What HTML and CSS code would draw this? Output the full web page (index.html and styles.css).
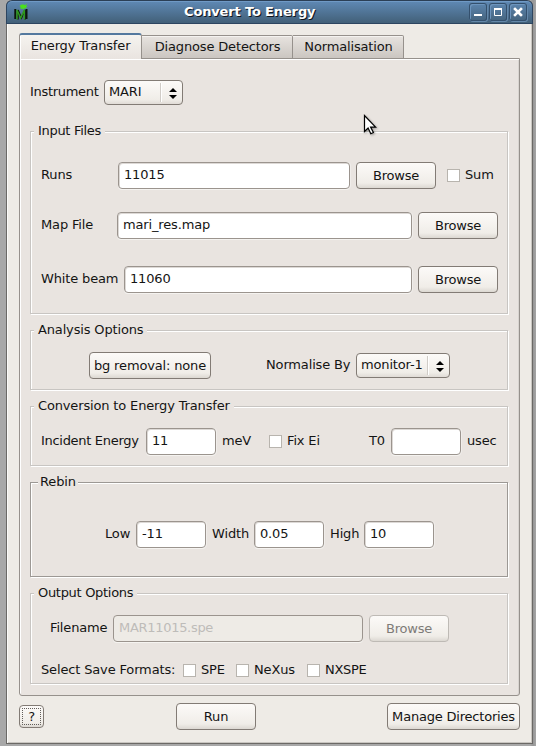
FILE: index.html
```html
<!DOCTYPE html>
<html lang="en">
<head>
<meta charset="utf-8">
<title>Convert To Energy</title>
<link rel="stylesheet" href="styles.css">
</head>
<body>
<div class="window">
  <header class="titlebar">
    <svg class="app-icon" width="15" height="18" viewBox="0 0 15 18">
      <path d="M1.300 6v10M12.500 6v10" fill="none" stroke="#0c160c" stroke-width="2"/>
      <path d="M4 16.500V7l3.500 8L11 7v9.500" fill="none" stroke="#0c1a0c" stroke-width="1.500"/>
      <path d="M3 16.500V7l3.700 8 3.600-8v9.500" fill="none" stroke="#2f9a1c" stroke-width="1.400"/>
      <path d="M5.500 3l2-1.500h2.500l1 .7L13 .5l-.8 2.200 1.300.8-1.600.7.6 1.800-1.800-1-1.200 1.500-1.200-1-2 .8.600-1.800z" fill="#4be01c"/>
    </svg>
    <h1 class="title">Convert To Energy</h1>
    <div class="controls">
      <span class="control"><svg width="18" height="18"><path d="M5 12h8" stroke="#fff" stroke-width="2"/></svg></span>
      <span class="control"><svg width="18" height="18"><path d="M5.500 6v6.500h7V6" fill="none" stroke="#fff"/><path d="M5 6h8" stroke="#fff" stroke-width="2"/></svg></span>
      <span class="control"><svg width="18" height="18"><path d="M6 6l6 6M12 6l-6 6" stroke="#fff" stroke-width="2.600" stroke-linecap="square"/></svg></span>
    </div>
  </header>
  <nav class="tabs">
    <span class="tab active">Energy Transfer</span>
    <span class="tab detectors">Diagnose Detectors</span>
    <span class="tab normalisation">Normalisation</span>
  </nav>
  <main class="panel">
    <div class="row instrument">
      <span class="label w-instrument tight">Instrument</span>
      <span class="combo c-instrument"><span class="value">MARI</span><svg class="arrows" width="8" height="11"><path d="M0 4L4 0l4 4zM0 7h8l-4 4z"/></svg></span>
    </div>

    <section class="group input-files">
      <h2 class="legend tight">Input Files</h2>
      <div class="row runs">
        <span class="label w-runs">Runs</span><span class="field f-runs">11015</span>
        <span class="button browse">Browse</span><span class="check"></span><span class="label">Sum</span>
      </div>
      <div class="row map">
        <span class="label w-map">Map File</span><span class="field f-map">mari_res.map</span><span class="button browse">Browse</span>
      </div>
      <div class="row beam">
        <span class="label w-beam">White beam</span><span class="field f-beam">11060</span><span class="button browse">Browse</span>
      </div>
    </section>

    <section class="group analysis">
      <h2 class="legend">Analysis Options</h2>
      <div class="row">
        <span class="button bg-removal">bg removal: none</span>
        <span class="label w-normalise">Normalise By</span>
        <span class="combo c-monitor"><span class="value">monitor-1</span><svg class="arrows" width="8" height="11"><path d="M0 4L4 0l4 4zM0 7h8l-4 4z"/></svg></span>
      </div>
    </section>

    <section class="group conversion">
      <h2 class="legend">Conversion to Energy Transfer</h2>
      <div class="row">
        <span class="label w-incident tight">Incident Energy</span><span class="field short">11</span>
        <span class="label w-mev">meV</span><span class="check"></span><span class="label w-fix">Fix Ei</span>
        <span class="label w-t0">T0</span><span class="field short"></span><span class="label w-usec">usec</span>
      </div>
    </section>

    <section class="group rebin">
      <h2 class="legend">Rebin</h2>
      <div class="row">
        <span class="label w-low">Low</span><span class="field short">-11</span>
        <span class="label w-width">Width</span><span class="field short">0.05</span>
        <span class="label w-high">High</span><span class="field short">10</span>
      </div>
    </section>

    <section class="group output">
      <h2 class="legend tight">Output Options</h2>
      <div class="row filename">
        <span class="label w-filename">Filename</span><span class="field f-filename tight disabled">MAR11015.spe</span>
        <span class="button browse disabled">Browse</span>
      </div>
      <div class="row formats">
        <span class="label w-formats">Select Save Formats:</span>
        <span class="check"></span><span class="label w-spe">SPE</span>
        <span class="check"></span><span class="label w-nexus">NeXus</span>
        <span class="check"></span><span class="label tight">NXSPE</span>
      </div>
    </section>
  </main>
  <footer class="footer">
    <span class="button help">?</span>
    <span class="button run">Run</span>
    <span class="button manage">Manage Directories</span>
  </footer>
</div>
<svg class="pointer" width="14" height="22" viewBox="0 0 14 22"><path d="M1.500 1.500v16l3.600-3.400 2.700 5.700 2.600-1.300-2.800-5.400h5z" fill="#fff" stroke="#000" stroke-width="1.200"/></svg>
</body>
</html>
```
FILE: styles.css
```css
* { box-sizing: border-box; }
body {
  margin: 0;
  width: 536px;
  height: 746px;
  overflow: hidden;
  background: linear-gradient(90deg, #a8a8a8 530px, #969696 533px, #a5a5a5 536px);
  color: #141414;
  font: 13px/15px "DejaVu Sans", sans-serif;
  letter-spacing: -0.15px;
}
.window {
  display: flex;
  flex-direction: column;
  width: 527px;
  height: 744px;
  margin-left: 6px;
  border: 1px solid #6b6966;
  border-top: 0;
  border-radius: 6px 6px 0 0;
  background: #eeebe6;
  box-shadow: inset 1px 0 #fbfaf8, inset -1px -1px #c9c6c1;
}
.titlebar {
  display: flex;
  flex: none;
  height: 24px;
  margin: 0 -1px;
  padding: 3px 6px 0 7px;
  border: 1px solid #2d4560;
  border-top: 1px solid #2b3f56;
  border-radius: 6px 6px 0 0;
  background: linear-gradient(#5f89b5, #426078);
  box-shadow: inset 0 1px #6f99c5;
}
.app-icon { margin: -1px 0 0; }
.title {
  flex: 1;
  margin: 0;
  padding-left: 155px;
  color: #fff;
  font-size: 13px;
  line-height: 15px;
  white-space: nowrap;
  text-shadow: 1px 1px #10151c;
}
.controls { display: flex; gap: 2px; margin: -1px -1px 0 0; }
.control {
  width: 18px;
  height: 18px;
  border-radius: 3px;
  box-shadow: inset 0 0 0 1px #34506d, inset 2px 2px #6c94bd, 1px 1px #6488aa;
}
.control svg { display: block; }
.tabs { display: flex; align-items: flex-end; height: 35px; margin-left: 12px; }
.tab {
  height: 24px;
  padding: 3px 0 0 1px;
  border: 1px solid #96918c;
  border-left: 0;
  border-radius: 0 2px 0 0;
  background: linear-gradient(#e7e3df, #cbc6c1);
  box-shadow: inset 0 1px #f5f3f0;
  text-align: center;
  white-space: nowrap;
}
.tab.active {
  position: relative;
  z-index: 1;
  width: 123px;
  height: 26px;
  padding-top: 3px;
  padding-left: 0;
  border: 1px solid #96918c;
  border-top: 2px solid #54799f;
  border-bottom: 0;
  border-radius: 3px 3px 0 0;
  background: linear-gradient(#f5f3ef, #e9e4e0);
  box-shadow: inset 1px 0 #fff;
}
.detectors { width: 151px; }
.normalisation { width: 111px; }
.panel {
  flex: none;
  width: 501px;
  height: 638px;
  margin: -1px 0 0 12px;
  padding: 0 0 0 10px;
  border: 1px solid #96918c;
  border-radius: 0 0 3px 3px;
  background: #e9e4e0;
  box-shadow: inset 1px 1px #fff, inset -1px 0 #d8d4d0;
}
.row { display: flex; align-items: flex-start; height: 27px; white-space: nowrap; }
.label { flex: none; padding-top: 5px; }
.tight { letter-spacing: -0.3px; }
.instrument { margin-top: 20px; }
.field, .button, .combo {
  flex: none;
  height: 27px;
  border: 1px solid #9b948e;
  border-radius: 4px;
}
.field {
  padding: 4px 5px;
  border-color: #9b948e;
  background: #fff;
  box-shadow: inset 1px 1px #ddd9d6, 0 1px #f5f3f0, 1px 0 #f0edea;
}
.button {
  padding-top: 5px;
  border-color: #827b75;
  background: linear-gradient(#fcfaf8, #f0ede8 80%, #dcd8d2);
  text-align: center;
}
.browse { width: 80px; margin-left: 6px; letter-spacing: -0.25px; }
.field.disabled { background: #eeebe6; color: #bebcb9; box-shadow: 0 1px #f6f4f1; }
.button.disabled { border-color: #bebab5; color: #7e7b78; }
.combo {
  display: flex;
  height: 25px;
  margin-top: 1px;
  padding: 3px 5px 0 4px;
  border-color: #827b75;
  background: linear-gradient(#fcfaf8, #f0ede8 80%, #e0dbd6);
}
.combo .value {
  flex: 1;
  height: 19px;
  margin: -1px 8px 0 0;
  padding-top: 1px;
  border-right: 1px solid #d0ccc7;
  box-shadow: 1px 0 #fff;
}
.arrows { margin-top: 4px; }
.check {
  flex: none;
  width: 13px;
  height: 13px;
  margin: 7px 5px 0 0;
  border: 1px solid #b8b4ae;
  background: #fff;
}
.group {
  position: relative;
  width: 478px;
  border: 1px solid #c8c5c2;
  box-shadow: 1px 1px #fff, inset 1px 1px #fff;
}
.legend {
  position: absolute;
  top: -9px;
  left: 3px;
  height: 15px;
  margin: 0;
  padding: 0 4px;
  background: #e9e4e0;
  font-size: 13px;
  font-weight: normal;
  line-height: 15px;
  white-space: nowrap;
}
.w-instrument { width: 74px; }
.c-instrument { width: 79px; }
.input-files { height: 183px; margin-top: 25px; padding: 30px 0 0 10px; }
.map, .beam { margin-top: 23px; }
.beam { margin-top: 27px; }
.w-runs { width: 77px; }
.f-runs { width: 232px; }
.runs .check { margin-left: 11px; }
.w-map { width: 76px; }
.f-map { width: 295px; }
.w-beam { width: 83px; }
.f-beam { width: 288px; }
.analysis { height: 60px; margin-top: 16px; padding: 21px 0 0 58px; }
.bg-removal { width: 122px; }
.w-normalise { width: 90px; margin-left: 55px; }
.c-monitor { width: 94px; }
.conversion { height: 60px; margin-top: 16px; padding: 21px 0 0 10px; }
.short { width: 70px; }
.w-incident { width: 105px; }
.w-mev { width: 47px; margin-left: 6px; }
.w-fix { width: 82px; }
.w-t0 { width: 22px; }
.w-usec { margin-left: 6px; }
.rebin { height: 95px; margin-top: 16px; padding: 38px 0 0 74px; border-color: #9c9894; }
.rebin .legend { left: 7px; padding: 0 2px; }
.w-low { width: 31px; }
.w-width { width: 42px; margin-left: 6px; }
.w-high { width: 34px; margin-left: 6px; }
.output { height: 91px; margin-top: 16px; padding: 21px 0 0 10px; }
.w-filename { width: 63px; margin-left: 9px; }
.f-filename { width: 250px; }
.formats { margin-top: 15px; }
.w-formats { width: 142px; }
.w-spe { width: 35px; }
.w-nexus { width: 53px; }
.footer { display: flex; margin: 7px 12px 0; }
.help {
  width: 25px;
  height: 23px;
  margin-top: 2px;
  padding-top: 2px;
  outline: 1px dotted #625e5a;
  outline-offset: -4px;
  line-height: 17px;
}
.run { width: 80px; margin-left: 132px; }
.manage { width: 133px; margin-left: 131px; letter-spacing: -0.2px; }
.pointer { position: absolute; left: 363px; top: 114px; filter: drop-shadow(1px 1px 1px #0005); }
```
